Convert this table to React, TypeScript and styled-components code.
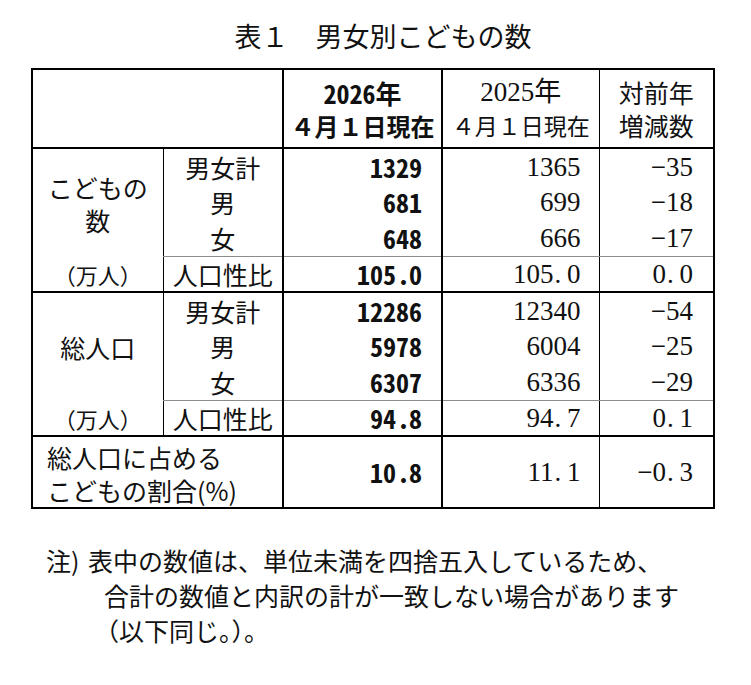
import React from "react";
import styled, { createGlobalStyle } from "styled-components";

const GlobalStyle = createGlobalStyle`
  html, body { margin: 0; padding: 0; background: #ffffff; }
  body { color: #111111; font-family: "Noto Sans CJK JP", sans-serif; }
`;

const JP = `"Noto Sans CJK JP", sans-serif`;
const SERIF = `"Liberation Serif", "Noto Sans CJK JP", serif`;
const GOTHIC = `"Noto Sans Mono CJK JP", "Noto Sans CJK JP", sans-serif`;

const Page = styled.div`
  padding: 18px 0 0 31px;
  width: 682px;
`;

const Title = styled.h1`
  margin: 0 0 14px;
  padding-left: 22px;
  text-align: center;
  font-family: ${JP};
  font-weight: 400;
  font-size: 27px;
  line-height: 36px;
  color: #111;
`;

const Table = styled.table`
  width: 682px;
  table-layout: fixed;
  border-collapse: collapse;
  border: 2px solid #000;
`;

const Col = styled.col<{ $w: number; $l?: number; $r?: number }>`
  width: ${(p) => p.$w}px;
  border-left: ${(p) => (p.$l ? `${p.$l}px solid #000` : "none")};
  border-right: ${(p) => (p.$r ? `${p.$r}px solid #000` : "none")};
`;

const Head = styled.thead`
  border-bottom: 2px solid #000;
`;

const Group = styled.tbody`
  border-top: 2px solid #000;
`;

const HeadRow = styled.tr`
  height: 79px;
`;

const Row = styled.tr<{ $h?: number }>`
  height: ${(p) => p.$h ?? 36}px;
`;

const Cell = styled.td`
  padding: 0;
  vertical-align: middle;
  font-family: ${JP};
  font-weight: 400;
  font-size: 25px;
  line-height: 32px;
  color: #111;
  white-space: nowrap;
`;

const HeadCell = styled(Cell)<{ $bold?: boolean; $serif?: boolean }>`
  text-align: center;
  font-family: ${(p) => (p.$bold ? GOTHIC : p.$serif ? SERIF : JP)};
  font-weight: ${(p) => (p.$bold ? 700 : 400)};
  font-size: 25px;
  line-height: 33px;
`;

const HeadLine = styled.div<{ $size?: number; $jp?: boolean }>`
  font-family: ${(p) => (p.$jp ? JP : "inherit")};
  font-size: ${(p) => p.$size ?? 25}px;
  line-height: 33px;
`;

const GroupLabel = styled(Cell)`
  text-align: center;
  font-size: 25px;
  line-height: 33px;
  padding-top: 2px;
`;

const UnitLabel = styled(Cell)`
  text-align: center;
  font-size: 22px;
`;

const SubLabel = styled(Cell)<{ $ratio?: boolean }>`
  text-align: center;
  font-size: 25px;
  border-top: ${(p) => (p.$ratio ? "1px solid #8c8c8c" : "none")};
`;

const CurNum = styled(Cell)<{ $ratio?: boolean }>`
  text-align: right;
  padding-right: 19px;
  font-family: ${GOTHIC};
  font-weight: 700;
  font-size: 26px;
  font-feature-settings: "hwid" 1;
  border-top: ${(p) => (p.$ratio ? "1px solid #8c8c8c" : "none")};
`;

const PrevNum = styled(Cell)<{ $ratio?: boolean; $pad?: number }>`
  text-align: right;
  padding-right: ${(p) => p.$pad ?? 18}px;
  font-family: ${SERIF};
  font-size: 27px;
  border-top: ${(p) => (p.$ratio ? "1px solid #8c8c8c" : "none")};
`;

const ShareLabel = styled(Cell)`
  text-align: left;
  padding: 4px 0 0 14px;
  font-size: 25px;
  line-height: 33px;
`;

const Dot = styled.span`
  display: inline-block;
  width: 0.5em;
  text-align: left;
  padding-left: 0.04em;
  box-sizing: border-box;
`;

const Note = styled.div`
  display: flex;
  margin: 34px 0 0 15px;
  font-family: ${JP};
  font-size: 25px;
  line-height: 35px;
  color: #111;
`;

const NoteMark = styled.div`
  width: 42px;
  flex: none;
`;

const NoteBody = styled.div`
  display: flex;
  flex-direction: column;
`;

const NoteLine = styled.span<{ $indent?: number }>`
  padding-left: ${(p) => p.$indent ?? 0}px;
  white-space: nowrap;
`;

const Num: React.FC<{ v: string }> = ({ v }) => {
  const i = v.indexOf(".");
  if (i < 0) return <>{v}</>;
  return (
    <>
      {v.slice(0, i)}
      <Dot>.</Dot>
      {v.slice(i + 1)}
    </>
  );
};

type DataRow = { label: string; cur: string; prev: string; diff: string };

type GroupData = { title: string[]; rows: DataRow[]; ratio: DataRow };

const groups: GroupData[] = [
  {
    title: ["こどもの", "数"],
    rows: [
      { label: "男女計", cur: "1329", prev: "1365", diff: "−35" },
      { label: "男", cur: "681", prev: "699", diff: "−18" },
      { label: "女", cur: "648", prev: "666", diff: "−17" },
    ],
    ratio: { label: "人口性比", cur: "105.0", prev: "105.0", diff: "0.0" },
  },
  {
    title: ["総人口"],
    rows: [
      { label: "男女計", cur: "12286", prev: "12340", diff: "−54" },
      { label: "男", cur: "5978", prev: "6004", diff: "−25" },
      { label: "女", cur: "6307", prev: "6336", diff: "−29" },
    ],
    ratio: { label: "人口性比", cur: "94.8", prev: "94.7", diff: "0.1" },
  },
];

export default function App() {
  return (
    <>
      <GlobalStyle />
      <Page>
        <Title>表１　男女別こどもの数</Title>
        <Table>
          <colgroup>
            <Col $w={131} />
            <Col $w={120} $l={1} />
            <Col $w={159} $l={2} $r={2} />
            <Col $w={157} $l={2} $r={1} />
            <Col $w={115} $l={1} />
          </colgroup>
          <Head>
            <HeadRow>
              <Cell colSpan={2} />
              <HeadCell $bold>
                <HeadLine $size={26}>2026年</HeadLine>
                <HeadLine $jp $size={24}>４月１日現在</HeadLine>
              </HeadCell>
              <HeadCell $serif>
                <HeadLine $size={27}>2025年</HeadLine>
                <HeadLine $jp $size={23}>４月１日現在</HeadLine>
              </HeadCell>
              <HeadCell>
                <HeadLine>対前年</HeadLine>
                <HeadLine>増減数</HeadLine>
              </HeadCell>
            </HeadRow>
          </Head>
          {groups.map((g) => (
            <Group key={g.title.join("")}>
              {g.rows.map((r, idx) => (
                <Row key={r.label}>
                  {idx === 0 && (
                    <GroupLabel rowSpan={3}>
                      {g.title.map((t) => (
                        <div key={t}>{t}</div>
                      ))}
                    </GroupLabel>
                  )}
                  <SubLabel>{r.label}</SubLabel>
                  <CurNum>
                    <Num v={r.cur} />
                  </CurNum>
                  <PrevNum>
                    <Num v={r.prev} />
                  </PrevNum>
                  <PrevNum $pad={20}>
                    <Num v={r.diff} />
                  </PrevNum>
                </Row>
              ))}
              <Row>
                <UnitLabel>（万人）</UnitLabel>
                <SubLabel $ratio>{g.ratio.label}</SubLabel>
                <CurNum $ratio>
                  <Num v={g.ratio.cur} />
                </CurNum>
                <PrevNum $ratio>
                  <Num v={g.ratio.prev} />
                </PrevNum>
                <PrevNum $ratio $pad={20}>
                  <Num v={g.ratio.diff} />
                </PrevNum>
              </Row>
            </Group>
          ))}
          <Group>
            <Row $h={70}>
              <ShareLabel colSpan={2}>
                <div>総人口に占める</div>
                <div>こどもの割合(%)</div>
              </ShareLabel>
              <CurNum>
                <Num v="10.8" />
              </CurNum>
              <PrevNum>
                <Num v="11.1" />
              </PrevNum>
              <PrevNum $pad={20}>
                <Num v="−0.3" />
              </PrevNum>
            </Row>
          </Group>
        </Table>
        <Note>
          <NoteMark>注)</NoteMark>
          <NoteBody>
            <NoteLine>表中の数値は、単位未満を四捨五入しているため、</NoteLine>
            <NoteLine $indent={16}>合計の数値と内訳の計が一致しない場合があります</NoteLine>
            <NoteLine $indent={6}>（以下同じ。）。</NoteLine>
          </NoteBody>
        </Note>
      </Page>
    </>
  );
}
